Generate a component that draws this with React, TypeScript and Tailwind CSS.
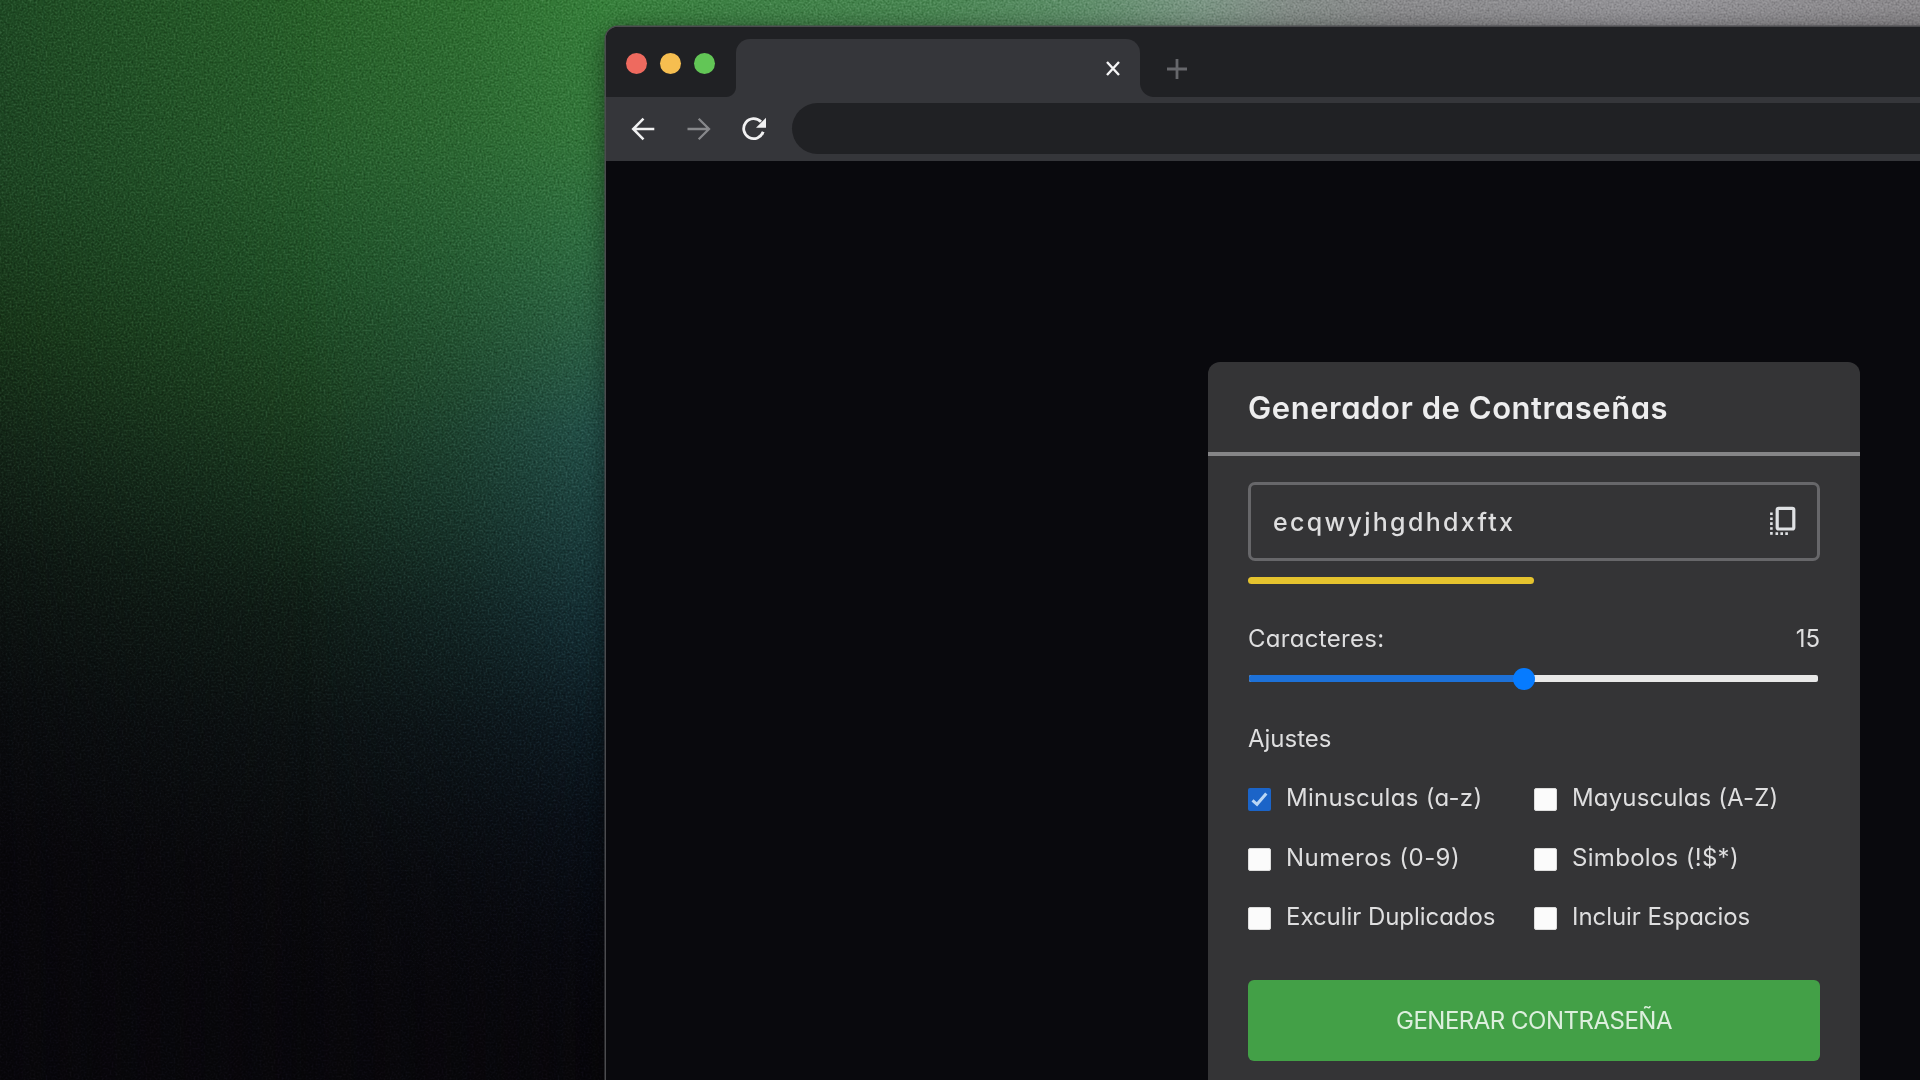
type Option = { label: string; checked?: boolean; spacing: string };

const options: Option[] = [
  { label: "Minusculas (a-z)", checked: true, spacing: "tracking-[0.3px]" },
  { label: "Mayusculas (A-Z)", spacing: "tracking-[0.15px]" },
  { label: "Numeros (0-9)", spacing: "tracking-[0.45px]" },
  { label: "Simbolos (!$*)", spacing: "tracking-[0.3px]" },
  { label: "Exculir Duplicados", spacing: "tracking-[-0.05px]" },
  { label: "Incluir Espacios", spacing: "tracking-[-0.05px]" },
];

function Wallpaper() {
  return (
    <div className="absolute inset-0 bg-[#08070b]">
      <div className="absolute inset-y-0 left-0 w-[620px] bg-[linear-gradient(180deg,#1f4a24_0px,#1d4422_180px,#183519_330px,#132417_450px,#0e1612_560px,#0a0c0e_700px,#08070b_850px)]" />
      <div className="absolute inset-y-0 left-0 w-[620px] bg-[linear-gradient(180deg,#286129_0px,#265c2b_150px,#205027_280px,#1c4020_400px,#16301d_500px,#101d16_610px,#0c1112_730px,#09090c_880px,#08070b_1000px)] [mask-image:linear-gradient(90deg,transparent_0px,black_320px)]" />
      <div className="absolute inset-y-0 left-0 w-[620px] bg-[linear-gradient(180deg,#37803b_0px,#34783b_130px,#2f6e42_240px,#2a5f45_340px,#23504a_430px,#1c3f40_530px,#142d34_630px,#0e1c24_720px,#0a1018_820px,#08090f_940px,#08070b_1040px)] [mask-image:linear-gradient(90deg,transparent_300px,rgba(0,0,0,0.4)_460px,black_610px)]" />
      <div className="absolute top-0 right-0 left-[600px] h-[60px] bg-[linear-gradient(90deg,#37803b_0px,#3e8145_130px,#4a8753_330px,#5f8f6a_480px,#7b9684_600px,#858e89_690px,#8b8b8d_800px,#949397_1040px,#8c8a8d_1320px)]" />
      <svg className="absolute inset-0 h-full w-full opacity-40 mix-blend-soft-light">
        <filter id="grain" colorInterpolationFilters="sRGB">
          <feTurbulence type="fractalNoise" baseFrequency="0.5" numOctaves="3" seed="4" />
          <feColorMatrix type="saturate" values="0" />
          <feComponentTransfer>
            <feFuncR type="linear" slope="1.8" intercept="-0.4" />
            <feFuncG type="linear" slope="1.8" intercept="-0.4" />
            <feFuncB type="linear" slope="1.8" intercept="-0.4" />
            <feFuncA type="linear" slope="0" intercept="1" />
          </feComponentTransfer>
        </filter>
        <rect width="100%" height="100%" filter="url(#grain)" />
      </svg>
    </div>
  );
}

function TabStrip() {
  return (
    <div className="flex h-[70px] items-end bg-[#202124]">
      <div className="flex h-[70px] w-[130px] items-center gap-[13px] pl-[20px]">
        <span className="mt-[2px] h-[21px] w-[21px] rounded-full bg-[#ee6a5f]" />
        <span className="mt-[2px] h-[21px] w-[21px] rounded-full bg-[#f6be50]" />
        <span className="mt-[2px] h-[21px] w-[21px] rounded-full bg-[#62c656]" />
      </div>
      <div className="relative flex h-[58px] w-[404px] items-center justify-end rounded-t-[14px] bg-[#35363a] pr-[20px]">
        <span className="absolute bottom-0 -left-[10px] h-[10px] w-[10px] bg-[radial-gradient(circle_at_0_0,#202124_9.5px,#35363a_10.5px)]" />
        <span className="absolute -right-[14px] bottom-0 h-[14px] w-[14px] bg-[radial-gradient(circle_at_100%_0,#202124_13.5px,#35363a_14.5px)]" />
        <svg width="14" height="15" viewBox="0 0 14 15" className="mt-px" fill="none" stroke="#f5f5f6" strokeWidth="2.4">
          <path d="M1 1 13 14M13 1 1 14" />
        </svg>
      </div>
      <svg width="20" height="20" viewBox="0 0 20 20" className="mb-[18px] ml-[27px]" fill="none" stroke="#66676b" strokeWidth="2.8">
        <path d="M10 0V20M0 10H20" />
      </svg>
    </div>
  );
}

function Toolbar() {
  return (
    <div className="flex h-[64px] items-center bg-[#35363a] pb-px pl-[25px]">
      <svg width="24" height="24" viewBox="0 0 24 24" fill="none" stroke="#f1f1f2" strokeWidth="2.5">
        <path d="M23.3 12H2.5M12.5 1.7 2.2 12l10.3 10.3" />
      </svg>
      <svg width="24" height="24" viewBox="0 0 24 24" className="ml-[32px]" fill="none" stroke="#87888b" strokeWidth="2.3">
        <path d="M.5 12h21.3M11.7 1.7 22 12 11.7 22.3" />
      </svg>
      <svg width="26" height="26" viewBox="0 0 26 26" className="ml-[30px]">
        <path d="M22.2 15.8A10 10 0 1 1 20 5.8" fill="none" stroke="#f1f1f2" strokeWidth="2.8" />
        <path d="M25 1.8v10H15z" fill="#f1f1f2" />
      </svg>
      <div className="ml-[25px] h-[51px] flex-1 rounded-l-full bg-[#202124]" />
    </div>
  );
}

function Checkbox({ checked }: { checked?: boolean }) {
  if (!checked) {
    return <span className="mt-[3px] h-[23px] w-[23px] shrink-0 rounded-[2px] border border-[#dcdcdc] bg-[#fbfbfb]" />;
  }
  return (
    <span className="mt-[3px] flex h-[23px] w-[23px] shrink-0 items-center justify-center rounded-[2px] bg-[#1b64c8]">
      <svg width="17" height="17" viewBox="0 0 17 17" fill="none" stroke="#b9d6f5" strokeWidth="3">
        <path d="M1.5 9.3 6 13.3 15.3 2.5" />
      </svg>
    </span>
  );
}

function CopyIcon() {
  return (
    <svg width="28" height="30" viewBox="0 0 28 30" className="-mt-px" fill="none" stroke="#dfe1e4">
      <rect x="8.2" y="2.4" width="16.6" height="20.6" rx="1.5" strokeWidth="3.2" />
      <path d="M2.4 6.5V29" strokeWidth="2.6" strokeDasharray="2.6 2.3" />
      <path d="M6.5 27.6H21" strokeWidth="2.6" strokeDasharray="2.6 2.3" />
    </svg>
  );
}

function GeneratorCard() {
  return (
    <section className="ml-[602px] h-[760px] w-[652px] shrink-0 rounded-t-[12px] bg-[#343436] text-[24px] leading-[36px] text-[#dededf]">
      <header className="flex h-[94px] items-center border-b-4 border-[#858587] pt-px pl-[40px]">
        <h1 className="text-[31px] font-semibold tracking-[0.55px] whitespace-nowrap text-[#ededee]">
          Generador de Contraseñas
        </h1>
      </header>
      <div className="flex flex-col px-[40px] pt-[26px]">
        <div className="flex h-[79px] items-center justify-between rounded-[7px] border-[3px] border-[#67676a] pr-[20px] pl-[22px]">
          <span className="text-[25px] font-medium tracking-[2.3px]">ecqwyjhgdhdxftx</span>
          <CopyIcon />
        </div>
        <div className="mt-[16px] h-[7px] w-1/2 rounded-full bg-[#e5c32e]" />
        <div className="mt-[37px] flex justify-between">
          <span className="tracking-[0.3px]">Caracteres:</span>
          <span>15</span>
        </div>
        <div className="relative mt-[18px] mr-[2px] ml-px h-[7px] rounded-[2px] bg-[#e8e8e8]">
          <div className="h-full w-[276px] rounded-l-[2px] bg-[#1d71d8]" />
          <span className="absolute -top-[7px] left-[264px] h-[22px] w-[22px] rounded-full bg-[#067bff]" />
        </div>
        <p className="mt-[39px]">Ajustes</p>
        <div className="mt-[23px] grid grid-cols-2 gap-y-[23.5px]">
          {options.map((o) => (
            <label key={o.label} className="flex items-center gap-[15px] whitespace-nowrap">
              <Checkbox checked={o.checked} />
              <span className={o.spacing}>{o.label}</span>
            </label>
          ))}
        </div>
        <button className="mt-[45px] h-[81px] rounded-[6px] bg-[#43a047] tracking-[-0.5px] text-[#dcefdd]">
          GENERAR CONTRASEÑA
        </button>
      </div>
    </section>
  );
}

export default function App() {
  return (
    <div className="relative h-[1080px] w-[1920px] overflow-hidden font-['Inter',sans-serif] [font-feature-settings:'cv11','ss03']">
      <Wallpaper />
      <main className="relative mt-[27px] ml-[606px] h-[1100px] w-[1340px] overflow-hidden rounded-tl-[12px] bg-[#09090d] shadow-[0_0_0_1.5px_#4b4b4e,0_4px_26px_rgba(0,0,0,0.55)]">
        <TabStrip />
        <Toolbar />
        <div className="pt-[201px]">
          <GeneratorCard />
        </div>
      </main>
    </div>
  );
}
